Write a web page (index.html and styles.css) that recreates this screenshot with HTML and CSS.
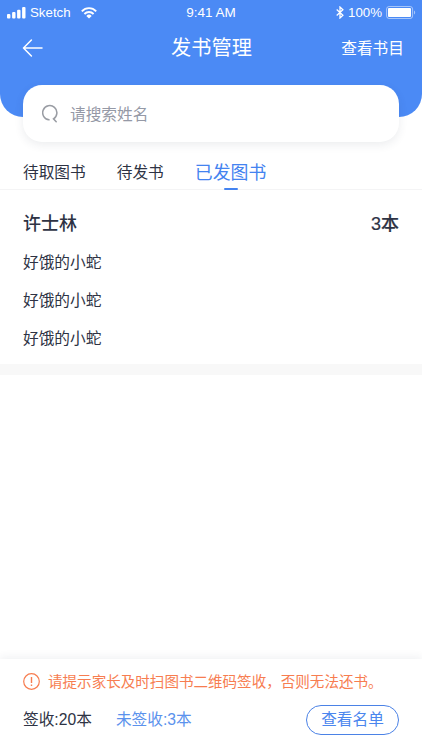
FILE: index.html
```html
<!DOCTYPE html>
<html lang="zh-CN">
<head>
<meta charset="utf-8">
<meta name="viewport" content="width=device-width, initial-scale=1">
<title>发书管理</title>
<link rel="stylesheet" href="styles.css">
</head>
<body>
<div class="screen">
  <header class="header">
    <div class="status">
      <div class="status-left">
        <svg class="signal" width="19" height="12" viewBox="0 0 19 12" fill="#fff"><rect x="0" y="7" width="3.4" height="4.4" rx="1"/><rect x="5.1" y="5" width="3.4" height="6.4" rx="1"/><rect x="10.1" y="2.8" width="3.4" height="8.6" rx="1"/><rect x="15.1" y="0" width="3.4" height="11.4" rx="1"/></svg>
        <span class="carrier">Sketch</span>
        <svg class="wifi" width="16" height="12" viewBox="0 0 16 12" fill="none" stroke="#fff" stroke-width="1.9"><path d="M.8 4.3C4.9.1 11.1.1 15.2 4.3"/><path d="M3.4 7c2.6-2.6 6.6-2.6 9.2 0"/><path d="M5.3 8.9a3.8 3.8 0 0 1 5.4 0L8 11.6z" fill="#fff" stroke="none"/></svg>
      </div>
      <span class="time">9:41 AM</span>
      <div class="status-right">
        <svg width="8" height="13" viewBox="0 0 8 13" fill="none" stroke="#fff" stroke-width="1.3"><path d="M.7 3.5l6.2 5.8L4 12V1l2.9 2.7L.7 9.5"/></svg>
        <span class="percent">100%</span>
        <svg width="30" height="14" viewBox="0 0 30 14"><rect x=".6" y=".5" width="26" height="12" rx="2.5" fill="none" stroke="#fff" stroke-opacity=".5"/><rect x="2" y="2" width="23" height="9" rx="1" fill="#fff"/><path d="M28 4.5v4c1.6-.7 1.6-3.3 0-4z" fill="#fff" fill-opacity=".5"/></svg>
      </div>
    </div>
    <nav class="navbar">
      <svg width="21" height="18" viewBox="0 0 21 18" fill="none" stroke="#fff" stroke-width="1.5" stroke-linecap="round" stroke-linejoin="round"><path d="M9.4 1L1.5 9l7.9 8M1.7 9h18.3"/></svg>
      <h1 class="title">发书管理</h1>
      <a class="catalog">查看书目</a>
    </nav>
  </header>
  <div class="search">
    <svg width="17" height="19" viewBox="0 0 17 19" fill="none" stroke="#999ca3" stroke-width="1.5" stroke-linecap="round"><path d="M7 15.8A7.1 7.1 0 1 1 11.5 14.8L14.2 17.7"/></svg>
    <span>请搜索姓名</span>
  </div>
  <div class="tabs">
    <span class="tab">待取图书</span>
    <span class="tab">待发书</span>
    <span class="tab active">已发图书</span>
  </div>
  <section class="record">
    <div class="record-head"><span>许士林</span><span class="count">3本</span></div>
    <ul class="books">
      <li>好饿的小蛇</li>
      <li>好饿的小蛇</li>
      <li>好饿的小蛇</li>
    </ul>
  </section>
  <footer class="footer">
    <div class="notice">
      <svg width="17" height="17" viewBox="0 0 17 17" fill="none" stroke="#f77d50" stroke-width="1.2"><circle cx="8.5" cy="8.5" r="7.8"/><path d="M8.5 4v6M8.5 11.5v1.5" stroke-width="1.4"/></svg>
      <span>请提示家长及时扫图书二维码签收，否则无法还书。</span>
    </div>
    <div class="summary">
      <span class="signed">签收:20本</span>
      <span class="unsigned">未签收:3本</span>
      <button class="list-button">查看名单</button>
    </div>
  </footer>
</div>
</body>
</html>
```
FILE: styles.css
```css
* { box-sizing: border-box; }
body {
  margin: 0;
  background: #fff;
  color: #2e3344;
  font-family: "Liberation Sans", "Noto Sans CJK SC", sans-serif;
  font-size: 15.7px;
}
svg { display: block; flex: none; }
.screen {
  height: 750px;
  display: flex;
  flex-direction: column;
  overflow: hidden;
}
.header {
  flex: none;
  height: 117px;
  background: #4b8af5;
  border-radius: 0 0 23px 23px;
  color: #fff;
}
.status {
  display: grid;
  grid-template-columns: 1fr auto 1fr;
  align-items: center;
  height: 25px;
  padding: 0 7px;
  font-size: 13.3px;
}
.status-left, .status-right { display: flex; align-items: center; }
.status-right { justify-content: flex-end; gap: 4px; margin-right: -1px; }
.carrier { margin: 0 10px 0 4px; }
.time { font-size: 13.5px; }
.navbar {
  display: grid;
  grid-template-columns: 1fr auto 1fr;
  align-items: center;
  height: 45px;
  padding: 0 18px 0 22px;
}
.title { margin: 0 0 0 -3px; font-size: 20.2px; font-weight: 400; line-height: 30px; }
.catalog { justify-self: end; padding-top: 2px; font-size: 15.7px; line-height: 24px; }
.search {
  flex: none;
  display: flex;
  align-items: center;
  gap: 11px;
  height: 57px;
  margin: -32px 23px 0;
  padding: 0 19px;
  background: #fff;
  border-radius: 19px;
  box-shadow: 0 3px 10px rgba(40, 50, 80, .09);
  color: #9599a6;
}
.tabs {
  flex: none;
  display: flex;
  align-items: center;
  gap: 31px;
  height: 48px;
  padding: 15px 23px 0;
  border-bottom: 1px solid #f4f4f5;
}
.tab { line-height: 34px; }
.active { position: relative; color: #4483f0; font-size: 17.9px; }
.active::after {
  content: "";
  position: absolute;
  left: 50%;
  bottom: 0;
  width: 14px;
  height: 2px;
  margin-left: -7px;
  border-radius: 1px;
  background: #4483f0;
}
.record {
  flex: none;
  height: 185px;
  padding: 15px 23px 0;
  border-bottom: 11px solid #f8f8f8;
}
.record-head {
  display: flex;
  justify-content: space-between;
  font-size: 18px;
  font-weight: 500;
  line-height: 38px;
}
.count { -webkit-text-stroke: .2px currentColor; }
.books { margin: 1px 0 0; padding: 0; list-style: none; line-height: 38px; }
.footer {
  height: 91px;
  margin-top: auto;
  padding: 9px 23px 0;
  background: #fff;
  box-shadow: 0 -2px 8px rgba(40, 50, 80, .07);
}
.notice {
  display: flex;
  align-items: center;
  gap: 8px;
  height: 26px;
  color: #f77d50;
  font-size: 14.55px;
  line-height: 24px;
  white-space: nowrap;
}
.notice span { margin-top: 1px; }
.summary { display: flex; align-items: center; height: 51px; }
.signed, .unsigned { margin-top: -2px; }
.unsigned { margin-left: 24px; color: #5b92ed; }
.list-button {
  width: 93px;
  height: 30px;
  margin-left: auto;
  padding: 0;
  border: 1px solid #4b82e6;
  border-radius: 15px;
  background: #fff;
  color: #4b86ee;
  font: inherit;
  line-height: 28px;
}
```
